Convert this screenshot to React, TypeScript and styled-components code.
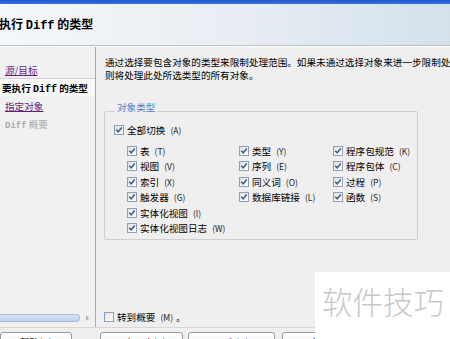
import styled, { createGlobalStyle } from 'styled-components';

const GlobalStyle = createGlobalStyle`
  html, body {
    margin: 0;
    padding: 0;
    background: #efefef;
  }
  body {
    font-family: "Noto Sans CJK SC", "Liberation Sans", sans-serif;
    font-size: 9.6px;
    color: #000;
  }
`;

const Window = styled.div`
  position: relative;
  width: 450px;
  height: 339px;
  overflow: hidden;
  display: flex;
  flex-direction: column;
  background: #efefef;
`;

const TitleBar = styled.div`
  height: 4px;
  background: linear-gradient(to bottom, #1d56d2, #3a72e0);
  flex-shrink: 0;
`;

const Header = styled.header`
  height: 41px;
  flex-shrink: 0;
  display: flex;
  align-items: center;
  background: linear-gradient(to right, #f5f7fa, #e7edf3 55%, #d4e1eb);
  border-bottom: 1px solid #b9c3cc;
  box-shadow: 0 1px 0 #ffffff;
`;

const Title = styled.h1`
  margin: 0 0 0 -1px;
  font-size: 12px;
  font-weight: bold;
  line-height: 14px;
  padding-top: 1px;
`;

const Mono = styled.span<{ $size?: number }>`
  font-family: "Liberation Mono", "DejaVu Sans Mono", monospace;
  font-weight: bold;
  font-size: ${p => p.$size ?? 11}px;
`;

const Body = styled.div`
  flex: 1;
  display: flex;
  min-height: 0;
  margin-top: 1px;
`;

const Nav = styled.nav`
  width: 95px;
  flex-shrink: 0;
  display: flex;
  flex-direction: column;
  border-right: 1px solid #a9a9a9;
  background: #f1f1f1;
  overflow: hidden;
`;

const NavList = styled.ul`
  list-style: none;
  margin: 0;
  padding: 13px 0 0;
  flex: 1;
`;

const NavItem = styled.li<{ $state: 'done' | 'current' | 'todo' }>`
  height: 18px;
  line-height: 18px;
  white-space: nowrap;
  overflow: hidden;
  padding-left: ${p => (p.$state === 'current' ? 2 : 5)}px;
  color: ${p => (p.$state === 'todo' ? '#a8a8a8' : p.$state === 'done' ? '#6a1b7a' : '#000')};
  font-weight: ${p => (p.$state === 'current' ? 'bold' : 'normal')};
  text-decoration: ${p => (p.$state === 'done' ? 'underline' : 'none')};
  background: ${p => (p.$state === 'current' ? '#f9f9f9' : 'transparent')};
  border-top: 1px solid ${p => (p.$state === 'current' ? '#d2d2d2' : 'transparent')};
  box-sizing: border-box;
`;

const HScroll = styled.div`
  height: 10px;
  margin-bottom: 4px;
  display: flex;
  align-items: center;
`;

const ScrollThumb = styled.div`
  width: 80px;
  height: 8px;
  box-sizing: border-box;
  border: 1px solid #a6bbdd;
  border-left: none;
  border-radius: 0 5px 5px 0;
  background: linear-gradient(to bottom, #d9e4f6, #bdd0ee);
`;

const ScrollArrow = styled.span`
  margin-left: 6px;
  width: 0;
  height: 0;
  border-top: 3px solid transparent;
  border-bottom: 3px solid transparent;
  border-left: 3px solid #b4b4b4;
`;

const Main = styled.main`
  flex: 1;
  display: flex;
  flex-direction: column;
  padding: 9px 0 0 8px;
  min-width: 0;
`;

const Description = styled.p`
  margin: 0 0 0 1px;
  line-height: 13px;
  white-space: nowrap;
`;

const GroupBox = styled.fieldset`
  width: 314px;
  box-sizing: border-box;
  margin: 19px 0 0;
  padding: 1px 0 3px 9px;
  border: 1px solid #cfcfcf;
  border-radius: 2px;
`;

const GroupLabel = styled.legend`
  padding: 0 2px 7px;
  margin-left: 1px;
  line-height: 13px;
  color: #4f7fc6;
`;

const Columns = styled.div`
  display: flex;
  margin-top: 6px;
  padding-left: 13px;
`;

const Column = styled.div<{ $width: number }>`
  width: ${p => p.$width}px;
  display: flex;
  flex-direction: column;
`;

const Option = styled.label`
  display: flex;
  align-items: center;
  height: 15.4px;
  gap: 3px;
  white-space: nowrap;
`;

const Box = styled.span<{ $checked: boolean }>`
  width: 10px;
  height: 10px;
  box-sizing: border-box;
  flex-shrink: 0;
  border: 1px solid #8aa0bd;
  background: linear-gradient(135deg, #e2e2dc, #ffffff);
  display: flex;
  align-items: center;
  justify-content: center;
  svg {
    display: ${p => (p.$checked ? 'block' : 'none')};
  }
`;

const Key = styled.span`
  margin-left: 2px;
  font-size: 8.5px;
  color: #222;
`;

const Spacer = styled.div`
  flex: 1;
`;

const BottomRow = styled.div`
  height: 12px;
  margin-bottom: 4px;
  display: flex;
  align-items: center;
`;

const Footer = styled.footer`
  height: 12px;
  box-sizing: border-box;
  flex-shrink: 0;
  display: flex;
  align-items: flex-start;
  padding-top: 4px;
  border-top: 1px solid #d6d6d6;
`;

const Button = styled.button<{ $width: number; $gap: number }>`
  width: ${p => p.$width}px;
  height: 21px;
  margin-left: ${p => p.$gap}px;
  flex-shrink: 0;
  border: 1px solid #9a9a9a;
  border-radius: 3px;
  background: linear-gradient(to bottom, #ffffff, #ececec);
  font-family: "Noto Sans CJK SC", sans-serif;
  font-size: 9.6px;
  color: #000;
  padding: 0;
  line-height: 19px;
`;

const Watermark = styled.div`
  position: absolute;
  right: 0;
  bottom: 0;
  width: 135px;
  height: 67px;
  box-sizing: border-box;
  background: #ffffff;
  padding: 14px 0 0 7px;
  font-size: 30.5px;
  line-height: 31px;
  font-weight: 300;
  color: #c8c8c8;
  white-space: nowrap;
`;

function Check({ checked, children }: { checked: boolean; children: React.ReactNode }) {
  return (
    <Option>
      <Box $checked={checked}>
        <svg width="8" height="8" viewBox="0 0 8 8">
          <path d="M1.2 3.8 L3.2 5.8 L6.8 1.6" fill="none" stroke="#3e5f8f" strokeWidth="1.6" />
        </svg>
      </Box>
      {children}
    </Option>
  );
}

const columns = [
  { width: 112, items: [['表', 'T'], ['视图', 'V'], ['索引', 'X'], ['触发器', 'G'], ['实体化视图', 'I'], ['实体化视图日志', 'W']] },
  { width: 94, items: [['类型', 'Y'], ['序列', 'E'], ['同义词', 'O'], ['数据库链接', 'L']] },
  { width: 80, items: [['程序包规范', 'K'], ['程序包体', 'C'], ['过程', 'P'], ['函数', 'S']] },
];

export default function App() {
  return (
    <Window>
      <GlobalStyle />
      <TitleBar />
      <Header>
        <Title>
          执行 <Mono $size={12}>Diff</Mono> 的类型
        </Title>
      </Header>
      <Body>
        <Nav>
          <NavList>
            <NavItem $state="done">源/目标</NavItem>
            <NavItem $state="current">
              要执行 <Mono $size={10}>Diff</Mono> 的类型
            </NavItem>
            <NavItem $state="done">指定对象</NavItem>
            <NavItem $state="todo">
              <Mono $size={9}>Diff</Mono> 概要
            </NavItem>
          </NavList>
          <HScroll>
            <ScrollThumb />
            <ScrollArrow />
          </HScroll>
        </Nav>
        <Main>
          <Description>
            通过选择要包含对象的类型来限制处理范围。如果未通过选择对象来进一步限制处理
            <br />
            则将处理此处所选类型的所有对象。
          </Description>
          <GroupBox>
            <GroupLabel>对象类型</GroupLabel>
            <Check checked>
              全部切换<Key>(A)</Key>
            </Check>
            <Columns>
              {columns.map(col => (
                <Column key={col.width} $width={col.width}>
                  {col.items.map(([label, key]) => (
                    <Check key={label} checked>
                      {label}
                      <Key>({key})</Key>
                    </Check>
                  ))}
                </Column>
              ))}
            </Columns>
          </GroupBox>
          <Spacer />
          <BottomRow>
            <Check checked={false}>
              转到概要<Key>(M)</Key>。
            </Check>
          </BottomRow>
        </Main>
      </Body>
      <Footer>
        <Button $width={72} $gap={0}>帮助(H)</Button>
        <Button $width={83} $gap={28}>&lt; 上一步(B)</Button>
        <Button $width={87} $gap={5}>下一步(N) &gt;</Button>
        <Button $width={74} $gap={7}>完成</Button>
      </Footer>
      <Watermark>软件技巧</Watermark>
    </Window>
  );
}
